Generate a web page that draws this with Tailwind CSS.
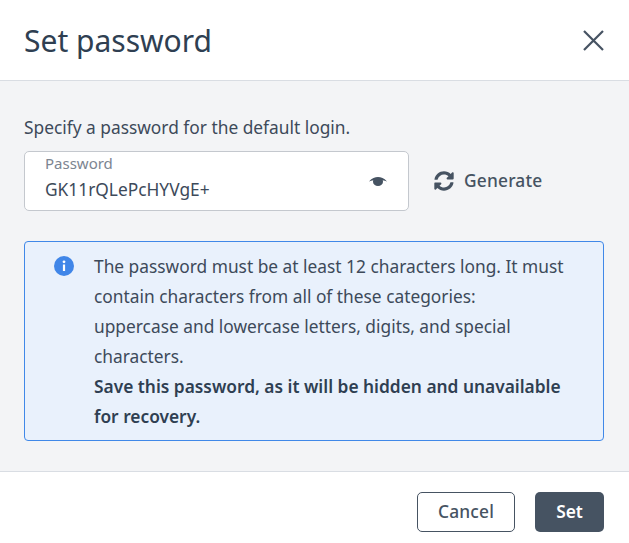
<!DOCTYPE html>
<html lang="en">
<head>
  <meta charset="UTF-8" />
  <title>Set password</title>
  <script src="https://cdn.jsdelivr.net/npm/@tailwindcss/browser@4"></script>
</head>
<body class="bg-white w-[629px] h-[543px] overflow-hidden font-['Noto_Sans',sans-serif] text-[#3d4a5a]">
  <header class="h-[81px] flex items-center justify-between px-6 border-b border-[#d9dde3]">
    <h1 class="text-[30px] text-[#2f3f52]">Set password</h1>
    <svg class="w-[21px] h-[21px] mr-[1px] text-[#465362]" viewBox="0 0 21 21" fill="none" stroke="currentColor" stroke-width="2.200"><path d="M1 1l19 19M20 1L1 20" /></svg>
  </header>
  <main class="bg-[#f3f4f6] h-[390px] pl-6 pr-[25px] pt-[35px]">
    <p class="text-[17.33px] leading-[22px]">Specify a password for the default login.</p>
    <div class="flex items-center mt-[13px]">
      <div class="w-[385px] h-[60px] bg-white border border-[#c4c8ce] rounded-[5px] pl-5 pr-[21px] flex items-center justify-between">
        <div class="pb-[7px]">
          <div class="text-[15px] leading-4 text-[#7c8591]">Password</div>
          <div class="text-[17.33px] leading-[22px] mt-[7px]">GK11rQLePcHYVgE+</div>
        </div>
        <svg class="w-[18px] h-[9px] mt-[1px] text-[#465362]" viewBox="0 0 18 9" fill="currentColor"><path d="M0 4.500C3 1 6 0 9 0s6 1 9 4.500c-1.500-.6-3-1-4.300-1.200.2.4.3.9.3 1.400a5 4.300 0 0 1-10 0c0-.5.1-1 .3-1.400C3 3.500 1.500 3.900 0 4.500z" /></svg>
      </div>
      <div class="flex items-center gap-[10px] ml-[25px] text-[#465362] font-medium">
        <svg class="w-5 h-5" viewBox="0 0 512 512" fill="currentColor"><path d="M370.720 133.280C339.458 104.008 298.888 87.962 255.848 88c-77.458.068-144.328 53.178-162.791 126.850-1.344 5.363-6.122 9.150-11.651 9.150H24.103c-7.498 0-13.194-6.807-11.807-14.176C33.933 94.924 134.813 8 256 8c66.448 0 126.791 26.136 171.315 68.685L463.030 40.970C478.149 25.851 504 36.559 504 57.941V192c0 13.255-10.745 24-24 24H345.941c-21.382 0-32.090-25.851-16.971-40.971l41.750-41.749zM32 296h134.059c21.382 0 32.090 25.851 16.971 40.971l-41.750 41.750c31.262 29.273 71.835 45.319 114.876 45.280 77.418-.07 144.315-53.144 162.787-126.849 1.344-5.363 6.122-9.150 11.651-9.150h57.304c7.498 0 13.194 6.807 11.807 14.176C478.067 417.076 377.187 504 256 504c-66.448 0-126.791-26.136-171.315-68.685L48.970 471.030C33.851 486.149 8 475.441 8 454.059V320c0-13.255 10.745-24 24-24z" /></svg>
        <span class="text-[17.33px] tracking-[0.2px]">Generate</span>
      </div>
    </div>
    <div class="mt-[30px] h-[200px] bg-[#e9f1fc] border border-[#4088e8] rounded-[4px] flex pl-[29px] pt-[9px]">
      <svg class="w-5 h-5 mt-[5px] shrink-0" viewBox="0 0 20 20"><circle cx="10" cy="10" r="10" fill="#4086e8" /><rect x="8.900" y="8.500" width="2.200" height="6.500" fill="#fff" /><circle cx="10" cy="5.800" r="1.400" fill="#fff" /></svg>
      <div class="ml-5 w-[471px] text-[17.33px] leading-[30px]">
        <p>The password must be at least 12 characters long. It must contain characters from all of these categories:<br />uppercase and lowercase letters, digits, and special characters.</p>
        <p class="font-semibold text-[#2f3f52]">Save this password, as it will be hidden and unavailable for recovery.</p>
      </div>
    </div>
  </main>
  <footer class="h-[72px] border-t border-[#d9dde3] flex items-start justify-end pt-5 pr-[25px] gap-5">
    <button class="w-[98px] h-10 border border-[#465362] rounded-[5px] bg-white text-[#465362] text-[17.33px] font-medium tracking-[0.2px]">Cancel</button>
    <button class="w-[69px] h-10 rounded-[5px] bg-[#465362] text-white text-[17.33px] font-semibold">Set</button>
  </footer>
</body>
</html>
